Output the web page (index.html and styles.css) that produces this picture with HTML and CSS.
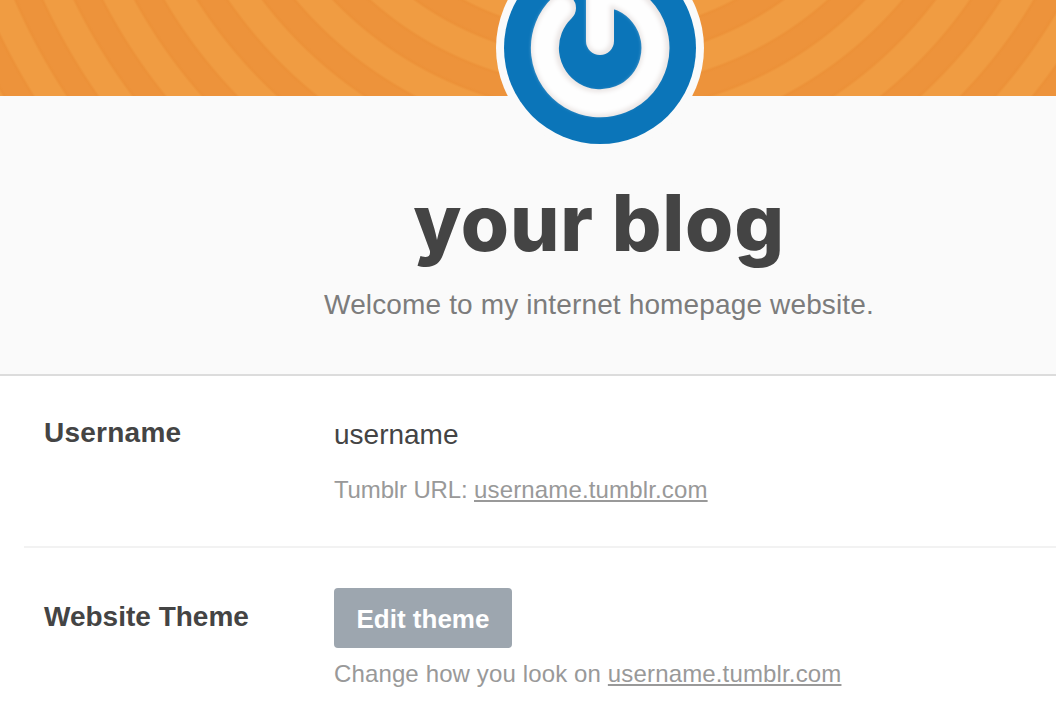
FILE: index.html
```html
<!DOCTYPE html>
<html lang="en">
<head>
<meta charset="utf-8">
<title>your blog</title>
<link rel="stylesheet" href="styles.css">
</head>
<body>
<header class="blog-header">
  <div class="banner">
    <svg class="avatar" viewBox="-104 -104 208 208" aria-label="Avatar">
      <defs>
        <filter id="soft" x="-20%" y="-20%" width="140%" height="140%"><feGaussianBlur stdDeviation="2"/></filter>
        <filter id="edge" x="-20%" y="-20%" width="140%" height="140%"><feGaussianBlur stdDeviation="0.7"/></filter>
      </defs>
      <circle r="104" fill="#fafafa"/>
      <circle r="96" fill="#0b75b9"/>
      <g fill="none" stroke-linecap="round" stroke-linejoin="round">
        <path d="M-38-40A55.3 55.3 0 1 0 0-55.3V-7" stroke="#ebe6e5" stroke-width="28" filter="url(#edge)"/>
        <path d="M-39-40A55.3 55.3 0 1 0-1-55.3V-7.5" stroke="#fefefe" stroke-width="22" filter="url(#soft)"/>
      </g>
    </svg>
  </div>
  <h1 class="title">your blog</h1>
  <p class="description">Welcome to my internet homepage website.</p>
</header>
<main class="settings">
  <section class="row">
    <h2 class="label username">Username</h2>
    <div class="field">
      <p class="value">username</p>
      <p class="hint url">Tumblr URL: <a class="link">username.tumblr.com</a></p>
    </div>
  </section>
  <section class="row">
    <h2 class="label">Website Theme</h2>
    <div class="field">
      <button class="button">Edit theme</button>
      <p class="hint change">Change how you look on <a class="link">username.tumblr.com</a></p>
    </div>
  </section>
</main>
</body>
</html>
```
FILE: styles.css
```css
* { box-sizing: border-box; }
body {
  margin: 0;
  height: 722px;
  overflow: hidden;
  background: #fff;
  color: #444;
  font-family: "Liberation Sans", Arial, sans-serif;
}
h1, h2, p { margin: 0; font-weight: normal; }
.blog-header {
  height: 376px;
  background: #fafafa;
  border-bottom: 2px solid #dcdcdc;
  text-align: center;
}
.banner {
  position: relative;
  height: 96px;
  background: repeating-radial-gradient(circle at 599px -255px,
    #f09c42 0, #f09c42 18px, #ec9138 20.5px, #ed933b 23px,
    #ed933b 42px, #ec9138 44.8px, #f09c42 47.3px, #f09c42 53.8px);
}
.avatar {
  position: absolute;
  left: 496px;
  top: -56px;
  width: 208px;
  height: 208px;
}
.title {
  height: 173px;
  padding: 81px 0 0 142px;
  font: 800 78px/92px Inter, sans-serif;
  letter-spacing: 0.8px;
}
.description {
  padding: 20px 0 0 142px;
  font-size: 28px;
  line-height: 32px;
  letter-spacing: 0.14px;
  color: #7c7c7c;
}
.title, .description { white-space: nowrap; }
.settings { padding-left: 24px; }
.row {
  display: grid;
  grid-template-columns: 290px 1fr;
  height: 172px;
  padding: 40px 0 0 20px;
  border-bottom: 2px solid #f2f2f2;
}
.row:last-child { border: 0; }
.label {
  padding-top: 1px;
  font-size: 28px;
  font-weight: bold;
  line-height: 32px;
}
.username { letter-spacing: 0.25px; }
.row:last-child .label { padding-top: 13px; }
.value { padding-top: 3px; font-size: 28px; line-height: 32px; }
.hint { font-size: 24px; line-height: 28px; color: #999; white-space: nowrap; }
.url { padding-top: 25px; letter-spacing: -0.15px; }
.change { padding-top: 12px; letter-spacing: 0.13px; }
.link { color: #999; letter-spacing: 0.15px; text-decoration: underline; text-underline-offset: 2px; text-decoration-thickness: 2px; text-decoration-skip-ink: none; }
.button {
  display: block;
  width: 178px;
  height: 60px;
  padding: 2px 0 0;
  border: 0;
  border-radius: 4px;
  background: #9da6af;
  color: #fff;
  font: bold 26px/30px "Liberation Sans", Arial, sans-serif;
}
```
